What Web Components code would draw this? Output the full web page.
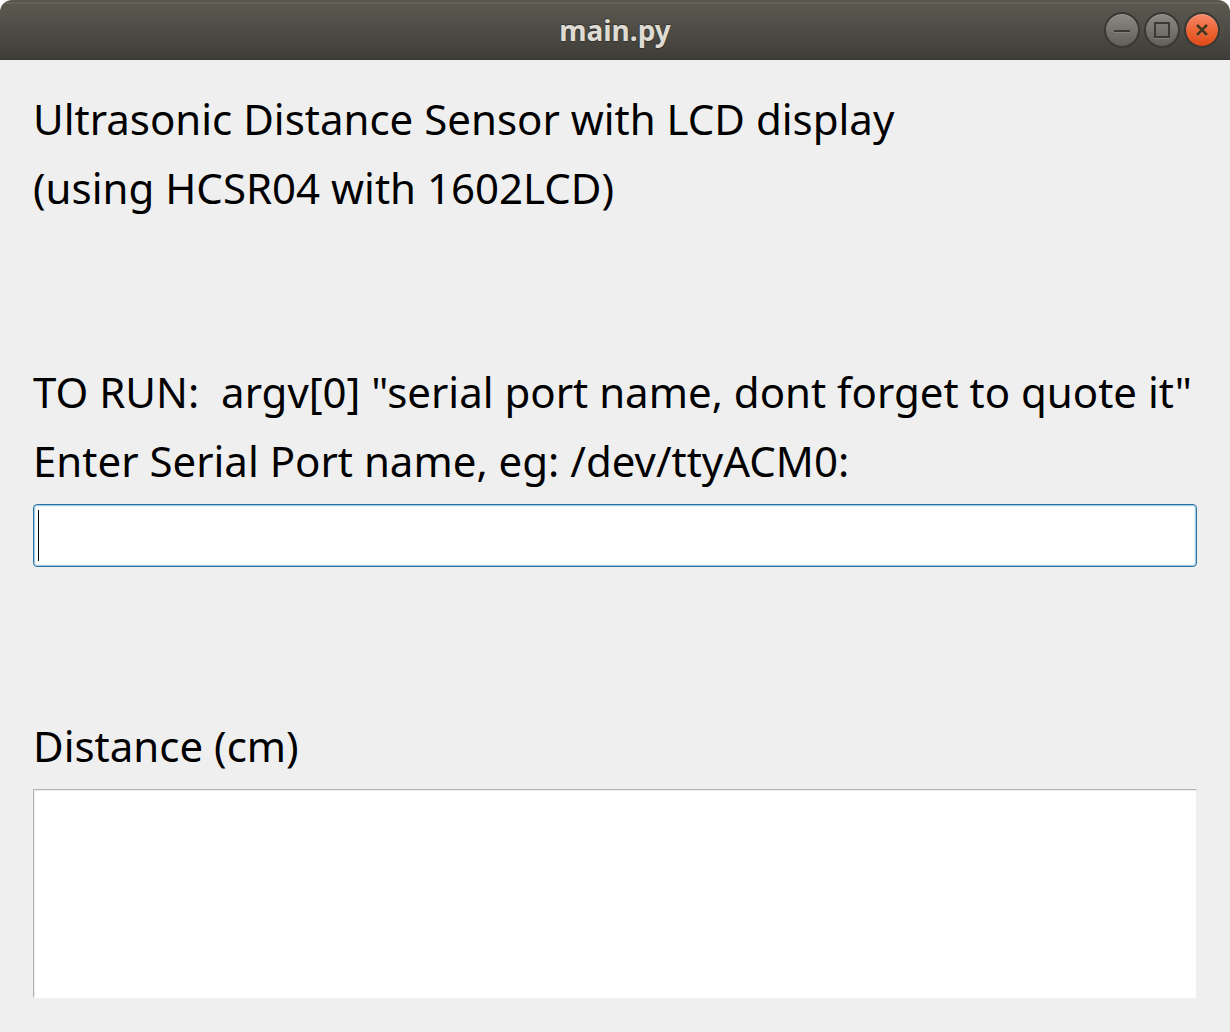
<!DOCTYPE html>
<html lang="en">
<head>
<meta charset="utf-8">
<title>main.py</title>
<style>
html, body { margin: 0; background: #fff; }
body { font-family: "Noto Sans", sans-serif; color: #000; }
</style>
</head>
<body>
<app-window>
  <title-bar slot="title">main.py</title-bar>
  <text-line>Ultrasonic Distance Sensor with LCD display</text-line>
  <text-line>(using HCSR04 with 1602LCD)</text-line>
  <flex-spacer></flex-spacer>
  <text-line>TO RUN:&nbsp; argv[0] "serial port name, dont forget to quote it"</text-line>
  <line-field>Enter Serial Port name, eg: /dev/ttyACM0:</line-field>
  <flex-spacer></flex-spacer>
  <output-field>Distance (cm)</output-field>
</app-window>
<script>
function define(name, markup) {
  const template = document.createElement('template');
  template.innerHTML = markup;
  customElements.define(name, class extends HTMLElement {
    constructor() {
      super();
      this.attachShadow({ mode: 'open' }).append(template.content.cloneNode(true));
    }
  });
}

define('app-window', `
<style>
  :host { display: flex; flex-direction: column; min-height: 100vh; background: #efefef; border-radius: 12px 12px 0 0; overflow: hidden; }
  main { flex: 1; display: flex; flex-direction: column; gap: 18px; padding: 33px 33px 34px; }
</style>
<slot name="title"></slot>
<main><slot></slot></main>`);

define('window-button', `
<style>
  :host { display: block; }
  button { display: block; width: 36px; height: 36px; padding: 0; box-sizing: border-box; border: 2px solid #3a3934; border-radius: 50%;
    background: linear-gradient(#8b8982, #605f5a) padding-box; box-shadow: inset 0 1px 0 #98968e; }
  :host([kind="close"]) button { background: linear-gradient(#f58a6a, #ee6637 50%, #df4a16) padding-box; box-shadow: inset 0 1px 0 #f79e83; }
  ::slotted(svg) { display: block; width: 32px; height: 32px; }
</style>
<button type="button"><slot></slot></button>`);

define('title-bar', `
<style>
  :host { display: grid; grid-template-columns: 1fr auto 1fr; align-items: center; height: 60px; box-sizing: border-box; padding: 0 10px;
    background: linear-gradient(#59574b 0 2px, #656255 2px 4px, #5b594f 4px, #3e3d39 59px, #393834 59px); }
  h1 { grid-column: 2; margin: 0; font-size: 28px; line-height: 36px; font-weight: 700; color: #dfdbd2; text-shadow: 0 -1px 1px #33322e, 0 1px 1px #33322e; }
  nav { display: flex; gap: 4px; justify-content: flex-end; }
  svg { fill: none; stroke: #3a3934; stroke-width: 2; }
</style>
<h1><slot></slot></h1>
<nav aria-label="Window controls">
  <window-button aria-label="Minimize"><svg viewBox="0 0 32 32"><path d="M8 18.5H24" stroke="#858379" stroke-width="1"/><path d="M8 17H24"/></svg></window-button>
  <window-button aria-label="Maximize"><svg viewBox="0 0 32 32"><path d="M8 24.5H24" stroke="#858379" stroke-width="1"/><rect x="9" y="9" width="14" height="14"/></svg></window-button>
  <window-button kind="close" aria-label="Close"><svg viewBox="0 0 32 32"><path d="M11 12L21 22M21 12L11 22" stroke="#f68b62"/><path d="M11 11L21 21M21 11L11 21" stroke="#41371f" stroke-width="2.6"/></svg></window-button>
</nav>`);

define('text-line', `
<style>
  :host { display: block; }
  p { margin: 0; font-size: 42px; line-height: 51px; white-space: nowrap; }
</style>
<p><slot></slot></p>`);

define('flex-spacer', `<style>:host { display: block; flex: 1; }</style>`);

define('line-field', `
<style>
  :host { display: flex; flex-direction: column; gap: 18px; }
  label { font-size: 42px; line-height: 51px; white-space: nowrap; }
  input { display: block; width: 100%; height: 63px; box-sizing: border-box; padding: 0 4px; border: 1px solid #2674a3; border-radius: 4px; outline: none;
    font: inherit; font-size: 42px; color: #000; background: #fff; box-shadow: inset 0 0 0 1px #a9cbe0, inset 0 0 0 2px #edf3f8; }
  input:placeholder-shown { caret-color: transparent; background: linear-gradient(#000, #000) 4px center / 1px 51px no-repeat #fff; }
</style>
<label for="field"><slot></slot></label>
<input id="field" type="text" placeholder=" ">`);

define('output-field', `
<style>
  :host { display: flex; flex-direction: column; gap: 18px; }
  label { font-size: 42px; line-height: 51px; white-space: nowrap; }
  textarea { display: block; width: 100%; height: 209px; box-sizing: border-box; padding: 4px; border: 1px solid #b5b5b5; border-right-color: transparent; border-bottom-color: #fff;
    outline: none; resize: none; font: inherit; font-size: 42px; background: #fff padding-box; box-shadow: inset 1px 1px 0 #ececec; }
</style>
<label for="field"><slot></slot></label>
<textarea id="field" readonly></textarea>`);
</script>
</body>
</html>
